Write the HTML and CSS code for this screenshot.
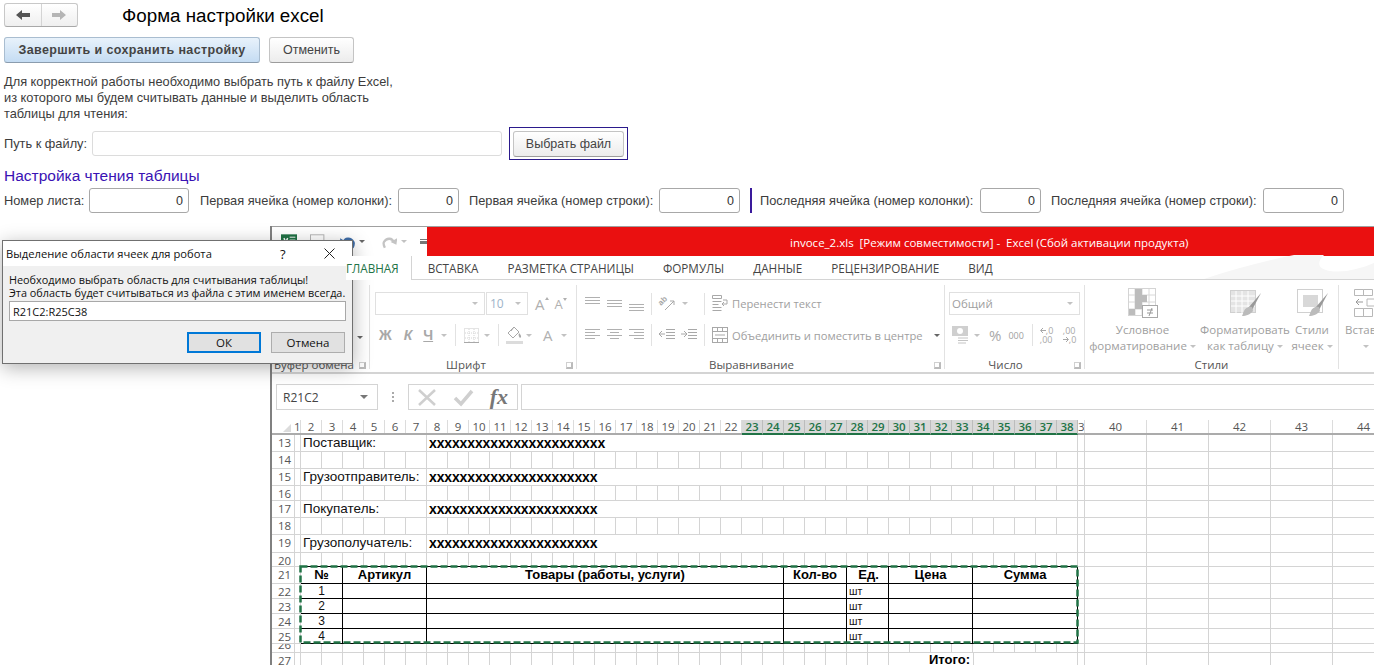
FILE: index.html
```html
<!DOCTYPE html>
<html>
<head>
  <title>Форма настройки excel</title>
  <meta charset="utf-8">
  <link rel="stylesheet" href="styles.css">
</head>
<body>

  <div class="form">
    <div class="topbar">
      <div class="nav-group">
        <div class="nav-btn">
          <svg width="16" height="12" viewBox="0 0 16 12"><path d="M1 6 7 1v3h8v4H7v3z" fill="#555"/></svg>
        </div>
        <div class="nav-btn">
          <svg width="16" height="12" viewBox="0 0 16 12"><path d="M15 6 9 1v3H1v4h8v3z" fill="#b5b5b5"/></svg>
        </div>
      </div>
      <div class="form-title">Форма настройки excel</div>
    </div>

    <div class="actions">
      <button class="btn btn-primary">Завершить и сохранить настройку</button>
      <button class="btn btn-cancel">Отменить</button>
    </div>

    <div class="intro">
      Для корректной работы необходимо выбрать путь к файлу Excel,<br>
      из которого мы будем считывать данные и выделить область<br>
      таблицы для чтения:
    </div>

    <div class="path-row">
      <label class="path-label">Путь к файлу:</label>
      <input class="path-input" type="text">
      <div class="focus-box"><button class="btn btn-file">Выбрать файл</button></div>
    </div>

    <h2 class="section-title">Настройка чтения таблицы</h2>

    <div class="params">
      <label>Номер листа:</label>
      <input class="num num-sheet" type="text" value="0">
      <label>Первая ячейка (номер колонки):</label>
      <input class="num" type="text" value="0">
      <label>Первая ячейка (номер строки):</label>
      <input class="num num-row" type="text" value="0">
      <div class="params-divider"></div>
      <label>Последняя ячейка (номер колонки):</label>
      <input class="num" type="text" value="0">
      <label>Последняя ячейка (номер строки):</label>
      <input class="num num-row" type="text" value="0">
    </div>
  </div>

  <div class="excel">
    <div class="titlebar">
      <div class="qat">
        <svg class="qat-logo" width="17" height="16" viewBox="0 0 17 16"><rect width="17" height="16" fill="#1f7244"/><path d="M9 3h6M9 6h6M9 9h6M9 12h6" stroke="#fff"/><path d="M3 4l4 8M7 4l-4 8" stroke="#fff" stroke-width="1.500"/></svg>
        <svg class="qat-save" width="15" height="15" viewBox="0 0 15 15"><rect x=".5" y=".5" width="14" height="14" fill="none" stroke="#b4b4b4"/></svg>
        <svg class="qat-undo" width="16" height="14" viewBox="0 0 16 14"><path d="M4 7C5 3 11 2 14 7c1 2 0 4-1 6" fill="none" stroke="#3f6da8" stroke-width="2.400"/><path d="M0 3l1 7 6-3z" fill="#3f6da8"/></svg>
        <span class="caret caret-dark"></span>
        <svg class="qat-redo" width="16" height="14" viewBox="0 0 16 14"><path d="M12 7C11 3 5 2 2 7c-1 2 0 4 1 6" fill="none" stroke="#c4c4c4" stroke-width="2.400"/><path d="M16 3l-1 7-6-3z" fill="#c4c4c4"/></svg>
        <span class="caret"></span>
        <span class="qat-custom"></span>
      </div>
      <div class="title-red">invoce_2.xls  [Режим совместимости] -  Excel (Сбой активации продукта)</div>
    </div>

    <div class="tabs">
      <div class="tab tab-active">ГЛАВНАЯ</div>
      <div class="tab">ВСТАВКА</div>
      <div class="tab">РАЗМЕТКА СТРАНИЦЫ</div>
      <div class="tab">ФОРМУЛЫ</div>
      <div class="tab">ДАННЫЕ</div>
      <div class="tab">РЕЦЕНЗИРОВАНИЕ</div>
      <div class="tab">ВИД</div>
      <svg class="tabs-art" width="170" height="24" viewBox="0 0 170 24"><path d="M0 24C30 14 60 6 90 0h30c-8 8-6 14 6 16 14 2 30-2 44-8v16z" fill="#f6f6f6"/></svg>
    </div>

    <div class="ribbon">
      <div class="rib-group g-clip">
        <div class="rib-caret"><span class="caret caret-dark"></span></div>
        <div class="rib-label">Буфер обмена<span class="launcher"></span></div>
      </div>

      <div class="rib-group g-font">
        <div class="rib-row row-1">
          <div class="combo combo-font"><span class="caret"></span></div>
          <div class="combo combo-size"><span class="combo-blue">10</span><span class="caret"></span></div>
          <div class="font-grow">A<i></i></div>
          <div class="font-shrink">A<i></i></div>
        </div>
        <div class="rib-row row-2">
          <b class="fmt fmt-b">Ж</b>
          <b class="fmt fmt-i">К</b>
          <b class="fmt fmt-u">Ч</b>
          <span class="caret"></span>
          <span class="rib-sep sep-a"></span>
          <svg class="ic-border" width="15" height="15" viewBox="0 0 15 15"><rect x=".5" y=".5" width="14" height="14" fill="none" stroke="#c9c9c9" stroke-dasharray="1 1"/><path d="M5 1v13M10 1v13M1 5h13M1 10h13" stroke="#d4d4d4" stroke-dasharray="1 1"/><path d="M0 14.500h15" stroke="#a8a8a8"/></svg>
          <span class="caret"></span>
          <span class="rib-sep sep-b"></span>
          <svg class="ic-fill" width="17" height="18" viewBox="0 0 17 18"><path d="M8 1 2 7l5 5 6-6z" fill="#fff" stroke="#a8a8a8"/><path d="M5 5 8 1" stroke="#a8a8a8"/><path d="M13 7c2 2 3 4 1 5-1-1-2-3-1-5z" fill="#a8a8a8"/><rect y="15" width="17" height="3" fill="#dcdcdc"/></svg>
          <span class="caret"></span>
          <span class="font-color">A</span>
          <span class="caret"></span>
        </div>
        <div class="rib-label">Шрифт<span class="launcher"></span></div>
      </div>

      <div class="rib-group g-align">
        <div class="rib-row row-1">
          <svg class="ic" width="15" height="16" viewBox="0 0 15 16"><path d="M0 1.500h15M0 4.500h15M0 7.500h15" stroke="#b0b0b0"/></svg>
          <svg class="ic" width="15" height="16" viewBox="0 0 15 16"><path d="M0 4.500h15M0 7.500h15M0 10.500h15" stroke="#b0b0b0"/></svg>
          <svg class="ic" width="15" height="16" viewBox="0 0 15 16"><path d="M0 8.500h15M0 11.500h15M0 14.500h15" stroke="#b0b0b0"/></svg>
          <span class="rib-sep sep-c"></span>
          <svg class="ic-orient" width="17" height="16" viewBox="0 0 17 16"><text class="orient-text" transform="translate(2 10) rotate(-45)">ab</text><path d="M6 14 15 5M15 5h-4M15 5v4" fill="none" stroke="#a8a8a8"/></svg>
          <span class="caret"></span>
          <span class="rib-sep sep-d"></span>
          <svg class="ic-wide" width="16" height="17" viewBox="0 0 16 17"><path d="M.5.500h9v3h-9zM.5 6.500h9M.5 9.500h6M.5 12.500h9M.5 15.500h9" fill="none" stroke="#a8a8a8"/><path d="M11 5h4v4h-5M12 7l-2 2 2 2" fill="none" stroke="#a8a8a8"/></svg>
          <span class="rib-text">Перенести текст</span>
        </div>
        <div class="rib-row row-2">
          <svg class="ic" width="15" height="14" viewBox="0 0 15 14"><path d="M0 1.500h15M0 4.500h10M0 7.500h15M0 10.500h10" stroke="#b0b0b0"/></svg>
          <svg class="ic" width="15" height="14" viewBox="0 0 15 14"><path d="M0 1.500h15M3 4.500h9M0 7.500h15M3 10.500h9" stroke="#b0b0b0"/></svg>
          <svg class="ic" width="15" height="14" viewBox="0 0 15 14"><path d="M0 1.500h15M5 4.500h10M0 7.500h15M5 10.500h10" stroke="#b0b0b0"/></svg>
          <span class="rib-sep sep-c"></span>
          <svg class="ic-indent" width="16" height="12" viewBox="0 0 16 12"><path d="M7 .500h9M7 3.500h9M7 6.500h9M7 9.500h9M0 5h6M3 2 0 5l3 3" fill="none" stroke="#a8a8a8"/></svg>
          <svg class="ic-indent" width="16" height="12" viewBox="0 0 16 12"><path d="M7 .500h9M7 3.500h9M7 6.500h9M7 9.500h9M0 5h6M3 2l3 3-3 3" fill="none" stroke="#a8a8a8"/></svg>
          <span class="rib-sep sep-e"></span>
          <svg class="ic-wide" width="16" height="16" viewBox="0 0 16 16"><rect x=".5" y=".5" width="15" height="15" fill="none" stroke="#a8a8a8"/><path d="M1 4.500h14M1 11.500h14M5.500 1v3M10.500 1v3M5.500 12v3M10.500 12v3M3 8h10" stroke="#a8a8a8"/></svg>
          <span class="rib-text">Объединить и поместить в центре</span>
          <span class="caret caret-dark caret-merge"></span>
        </div>
        <div class="rib-label">Выравнивание<span class="launcher"></span></div>
      </div>

      <div class="rib-group g-num">
        <div class="rib-row row-1">
          <div class="combo combo-num"><span class="combo-val">Общий</span><span class="caret"></span></div>
        </div>
        <div class="rib-row row-2">
          <svg class="ic-money" width="16" height="18" viewBox="0 0 16 18"><rect width="16" height="10" fill="#cfcfcf"/><circle cx="8" cy="5" r="3" fill="#fff"/><path d="M6 12h10M6 14.500h10M6 17h8" stroke="#c4c4c4"/></svg>
          <span class="caret"></span>
          <span class="pct">%</span>
          <span class="thous">000</span>
          <span class="rib-sep sep-f"></span>
          <span class="dec dec-more"><svg width="6" height="7" viewBox="0 0 6 7"><path d="M6 3.500H1M3 1 .5 3.500 3 6" fill="none" stroke="#a8a8a8"/></svg>,0<br>,00</span>
          <span class="dec">,00<br><svg width="6" height="7" viewBox="0 0 6 7"><path d="M0 3.500h5M3 1l2.500 2.500L3 6" fill="none" stroke="#a8a8a8"/></svg>,0</span>
        </div>
        <div class="rib-label">Число<span class="launcher"></span></div>
      </div>

      <div class="rib-group g-styles">
        <div class="big-btns">
          <div class="big big-cond">
            <svg width="30" height="30" viewBox="0 0 30 30"><rect x=".5" y=".5" width="27" height="27" fill="#fff" stroke="#d4d4d4"/><path d="M7 1v26M14 1v26M21 1v26M1 7h26M1 14h26M1 21h26" stroke="#d8d8d8"/><rect x="7" y="1" width="7" height="6" fill="#bcbcbc"/><rect x="7" y="7" width="12" height="7" fill="#bcbcbc"/><rect x="7" y="14" width="7" height="7" fill="#bcbcbc"/><rect x="1" y="21" width="6" height="6" fill="#bcbcbc"/><rect x="14.500" y="17.500" width="15" height="12" fill="#fff" stroke="#a8a8a8"/><path d="M19 22h6M19 25h6M24 20l-3 8" stroke="#999"/></svg>
            <div>Условное</div>
            <div>форматирование<span class="caret"></span></div>
          </div>
          <div class="big big-table">
            <svg width="31" height="30" viewBox="0 0 31 30"><rect x=".5" y="2.500" width="25" height="22" fill="#e4e4e4" stroke="#d0d0d0"/><path d="M6 3v22M12 3v22M18 3v22M1 8h24M1 13h24M1 18h24" stroke="#fff"/><path d="M31 5 19 19l3 3z" fill="#999"/><path d="M22 19c-3-1-7 1-8 4l-2 5c4 0 9-2 11-5z" fill="#bbb"/></svg>
            <div>Форматировать</div>
            <div>как таблицу<span class="caret"></span></div>
          </div>
          <div class="big big-cell">
            <svg width="31" height="30" viewBox="0 0 31 30"><rect x=".5" y="1.500" width="25" height="23" fill="#fff" stroke="#d0d0d0"/><rect x="6" y="7" width="15" height="12" fill="#d8d8d8"/><path d="M31 5 19 19l3 3z" fill="#999"/><path d="M22 19c-3-1-7 1-8 4l-2 5c4 0 9-2 11-5z" fill="#bbb"/></svg>
            <div>Стили</div>
            <div>ячеек<span class="caret"></span></div>
          </div>
        </div>
        <div class="rib-label">Стили</div>
      </div>

      <div class="rib-group g-insert">
        <div class="big big-insert">
          <svg width="30" height="30" viewBox="0 0 30 30"><path d="M.5 1.500h9v6h-9zM9.500 1.500h9v6h-9zM.5 20.500h9v8h-9zM9.500 20.500h9v8h-9zM13 11h17v7H13z" fill="none" stroke="#b8b8b8"/><path d="M9 14H2M5 11l-3 3 3 3" fill="none" stroke="#999"/></svg>
          <div>Вставить</div>
          <div><span class="caret"></span></div>
        </div>
      </div>
    </div>

    <div class="formula-bar">
      <div class="name-box">R21C2<span class="caret caret-name"></span></div>
      <div class="fx-dots"></div>
      <div class="fx-btns">
        <svg width="21" height="19" viewBox="0 0 21 19"><path d="M2 2l16 15M18 2 2 17" stroke="#cfcfcf" stroke-width="2.500"/></svg>
        <svg width="21" height="19" viewBox="0 0 21 19"><path d="M2 10l6 6L19 3" fill="none" stroke="#cfcfcf" stroke-width="3.500"/></svg>
        <span class="fx-label">fx</span>
      </div>
      <div class="formula-input"></div>
    </div>

    <div class="sheet">
      <div class="col-head">
        <div class="corner"><i></i></div>
        <span class="ch ch-first">1</span>
        <span class="ch">2</span><span class="ch">3</span><span class="ch">4</span><span class="ch">5</span><span class="ch">6</span><span class="ch">7</span>
        <span class="ch">8</span><span class="ch">9</span><span class="ch">10</span><span class="ch">11</span><span class="ch">12</span><span class="ch">13</span><span class="ch">14</span>
        <span class="ch">15</span><span class="ch">16</span><span class="ch">17</span><span class="ch">18</span><span class="ch">19</span><span class="ch">20</span><span class="ch">21</span><span class="ch">22</span>
        <span class="ch sel">23</span><span class="ch sel">24</span><span class="ch sel">25</span><span class="ch sel">26</span><span class="ch sel">27</span><span class="ch sel">28</span><span class="ch sel">29</span><span class="ch sel">30</span>
        <span class="ch sel">31</span><span class="ch sel">32</span><span class="ch sel">33</span><span class="ch sel">34</span><span class="ch sel">35</span><span class="ch sel">36</span><span class="ch sel">37</span><span class="ch sel">38</span>
        <span class="ch ch-thin">3</span>
        <span class="ch ch-wide">40</span><span class="ch ch-wide">41</span><span class="ch ch-wide">42</span><span class="ch ch-wide">43</span><span class="ch ch-wide">44</span>
      </div>

      <div class="row h17">
        <div class="rn">13</div><div class="c1"></div>
        <div class="cell-label">Поставщик:</div>
        <div class="cell-value">xxxxxxxxxxxxxxxxxxxxxxx</div>
        <div class="c39"></div><div class="wide"></div>
      </div>
      <div class="row h17">
        <div class="rn">14</div><div class="c1"></div>
        <div class="narrow"></div>
        <div class="c39"></div><div class="wide"></div>
      </div>
      <div class="row h17">
        <div class="rn">15</div><div class="c1"></div>
        <div class="cell-label">Грузоотправитель:</div>
        <div class="cell-value">xxxxxxxxxxxxxxxxxxxxxx</div>
        <div class="c39"></div><div class="wide"></div>
      </div>
      <div class="row h15">
        <div class="rn">16</div><div class="c1"></div>
        <div class="narrow"></div>
        <div class="c39"></div><div class="wide"></div>
      </div>
      <div class="row h17">
        <div class="rn">17</div><div class="c1"></div>
        <div class="cell-label">Покупатель:</div>
        <div class="cell-value">xxxxxxxxxxxxxxxxxxxxxx</div>
        <div class="c39"></div><div class="wide"></div>
      </div>
      <div class="row h17">
        <div class="rn">18</div><div class="c1"></div>
        <div class="narrow"></div>
        <div class="c39"></div><div class="wide"></div>
      </div>
      <div class="row h18">
        <div class="rn">19</div><div class="c1"></div>
        <div class="cell-label">Грузополучатель:</div>
        <div class="cell-value">xxxxxxxxxxxxxxxxxxxxxx</div>
        <div class="c39"></div><div class="wide"></div>
      </div>
      <div class="row h14">
        <div class="rn">20</div><div class="c1"></div>
        <div class="narrow"></div>
        <div class="c39"></div><div class="wide"></div>
      </div>

      <div class="row row-t h17">
        <div class="rn">21</div><div class="c1"></div>
        <div class="t t-num th">№</div><div class="t t-art th">Артикул</div><div class="t t-goods th">Товары (работы, услуги)</div>
        <div class="t t-qty th">Кол-во</div><div class="t t-unit th th-unit">Ед.</div><div class="t t-price th">Цена</div><div class="t t-sum th">Сумма</div>
        <div class="c39"></div><div class="wide"></div>
      </div>
      <div class="row row-t h15">
        <div class="rn">22</div><div class="c1"></div>
        <div class="t t-num">1</div><div class="t t-art"></div><div class="t t-goods"></div>
        <div class="t t-qty"></div><div class="t t-unit">шт</div><div class="t t-price"></div><div class="t t-sum"></div>
        <div class="c39"></div><div class="wide"></div>
      </div>
      <div class="row row-t h15">
        <div class="rn">23</div><div class="c1"></div>
        <div class="t t-num">2</div><div class="t t-art"></div><div class="t t-goods"></div>
        <div class="t t-qty"></div><div class="t t-unit">шт</div><div class="t t-price"></div><div class="t t-sum"></div>
        <div class="c39"></div><div class="wide"></div>
      </div>
      <div class="row row-t h15">
        <div class="rn">24</div><div class="c1"></div>
        <div class="t t-num">3</div><div class="t t-art"></div><div class="t t-goods"></div>
        <div class="t t-qty"></div><div class="t t-unit">шт</div><div class="t t-price"></div><div class="t t-sum"></div>
        <div class="c39"></div><div class="wide"></div>
      </div>
      <div class="row row-t h15">
        <div class="rn">25</div><div class="c1"></div>
        <div class="t t-num">4</div><div class="t t-art"></div><div class="t t-goods"></div>
        <div class="t t-qty"></div><div class="t t-unit">шт</div><div class="t t-price"></div><div class="t t-sum"></div>
        <div class="c39"></div><div class="wide"></div>
      </div>

      <div class="row h9">
        <div class="rn">26</div><div class="c1"></div>
        <div class="narrow"></div>
        <div class="c39"></div><div class="wide"></div>
      </div>
      <div class="row h17">
        <div class="rn">27</div><div class="c1"></div>
        <div class="narrow-part"></div>
        <div class="total-label">Итого:</div>
        <div class="total-value"></div>
        <div class="c39"></div><div class="wide"></div>
      </div>

      <!-- marching ants round the selected range -->
      <svg class="ants" width="781" height="80"><path d="M1.500 1.500H778" fill="none" stroke="#000"/><rect x="1.500" y="1.500" width="777" height="76" fill="none" stroke="#217346" stroke-width="2.500" stroke-dasharray="7 3"/></svg>
    </div>
  </div>

  <div class="dialog">
    <div class="dialog-head">
      <span class="dialog-title">Выделение области ячеек для робота</span>
      <span class="dialog-help">?</span>
      <svg class="dialog-close" width="11" height="11" viewBox="0 0 11 11"><path d="M.5.500l10 10M10.500.500l-10 10" stroke="#222"/></svg>
    </div>
    <div class="dialog-body">
      <div class="dialog-text">Необходимо выбрать область для считывания таблицы!<br>Эта область будет считываться из файла с этим именем всегда.</div>
      <input class="dialog-input" type="text" value="R21C2:R25C38">
      <div class="dialog-buttons">
        <button class="win-btn win-ok">ОК</button>
        <button class="win-btn">Отмена</button>
      </div>
    </div>
  </div>

</body>
</html>
```

FILE: styles.css
```css
* {
  box-sizing: border-box;
}
html, body {
  margin: 0;
  height: 665px;
  overflow: hidden;
}
body {
  position: relative;
  font-family: 'Liberation Sans', Arial, sans-serif;
  background: #fff;
  color: #3c3c3c;
}

/* 1C form */
.form {
  padding: 3px 0 0 4px;
  font-size: 12.800px;
}
.topbar {
  display: flex;
  align-items: center;
  height: 24px;
}
.nav-group {
  display: flex;
  width: 74px;
  height: 24px;
  border: 1px solid #c8c8c8;
  border-bottom-color: #a8a8a8;
  border-radius: 3px;
  background: linear-gradient(#fff, #efefef);
}
.nav-btn {
  flex: 1;
  display: flex;
  align-items: center;
  justify-content: center;
}
.nav-btn + .nav-btn {
  border-left: 1px solid #d4d4d4;
}
.form-title {
  margin: 1px 0 0 44px;
  font-size: 18.800px;
  color: #000;
}
.actions {
  display: flex;
  gap: 9px;
  margin-top: 10px;
}
.btn {
  height: 26px;
  padding: 0;
  font-family: inherit;
  font-size: 12.500px;
  color: #444;
  border: 1px solid #c4c4c4;
  border-bottom-color: #9c9c9c;
  border-radius: 3px;
  background: linear-gradient(#fff, #ececec);
}
.btn-primary {
  width: 256px;
  font-weight: bold;
  letter-spacing: .37px;
  border-color: #a9bdd0;
  border-bottom-color: #8a9cae;
  background: linear-gradient(#e8f2fb, #c4dcf3);
}
.btn-cancel {
  width: 85px;
}
.btn-file {
  width: 111px;
}
.intro {
  margin-top: 11px;
  line-height: 16px;
}
.path-row {
  display: flex;
  align-items: center;
  margin-top: 5px;
  height: 33px;
}
.path-label {
  width: 88px;
}
.path-input {
  width: 410px;
  height: 25px;
  border: 1px solid #dcdcdc;
  border-radius: 3px;
}
.focus-box {
  display: flex;
  align-items: center;
  justify-content: center;
  width: 119px;
  height: 33px;
  margin-left: 7px;
  border: 1px solid #2b1a8c;
}
.section-title {
  margin: 6px 0 0;
  font-size: 15.500px;
  line-height: 20px;
  font-weight: normal;
  color: #3a12b4;
}
.params {
  display: grid;
  grid-template-columns: 85px 111px 198px 71px 190px 91px 10px 220px 71px 212px 81px;
  align-items: center;
  height: 25px;
  margin-top: 2px;
}
.num {
  width: 61px;
  height: 25px;
  padding: 0 5px;
  font-family: inherit;
  font-size: 12.500px;
  color: #333;
  text-align: right;
  border: 1px solid #a8a8a8;
  border-radius: 3px;
}
.num-sheet {
  width: 100px;
}
.num-row {
  width: 81px;
}
.params-divider {
  width: 2px;
  height: 25px;
  background: #3a1a9c;
}

/* excel window */
.excel {
  position: relative;
  width: 1104px;
  margin: 13px 0 0 270px;
  border-left: 2px solid #808080;
  font-family: 'Open Sans', sans-serif;
}
.titlebar {
  display: flex;
  height: 30px;
  border-top: 1px solid #a0a0a0;
}
.qat {
  display: flex;
  align-items: center;
  width: 155px;
}
.qat-logo {
  margin-left: 9px;
}
.qat-save {
  margin-left: 13px;
}
.qat-undo {
  margin-left: 15px;
}
.qat-redo {
  margin-left: 17px;
}
.qat .caret {
  margin-left: 4px;
}
.qat-custom {
  width: 7px;
  height: 5px;
  margin-left: 13px;
  border-top: 1px solid #777;
  border-bottom: 3px solid #777;
}
.caret {
  display: inline-block;
  width: 0;
  height: 0;
  margin-left: 6px;
  border: 3px solid transparent;
  border-top: 3px solid #c2c2c2;
  border-bottom: 0;
  vertical-align: middle;
}
.caret-dark {
  border-top-color: #666;
}
.title-red {
  flex: 1;
  padding-left: 363px;
  line-height: 31px;
  font-size: 11.500px;
  color: #fff;
  white-space: pre;
  background: #ea1010;
}
.tabs {
  position: relative;
  display: flex;
  height: 24px;
  padding-left: 74px;
  border-bottom: 1px solid #d4d4d4;
  font-size: 11.700px;
  line-height: 25px;
  color: #444;
  white-space: nowrap;
}
.tab {
  position: relative;
  z-index: 1;
  margin-left: 29px;
}
.tab-active {
  height: 24px;
  margin-left: 0;
  padding-right: 12px;
  color: #217346;
  background: #fff;
  border-right: 1px solid #d4d4d4;
}
.tab-active + .tab {
  margin-left: 16px;
}
.tabs-art {
  position: absolute;
  right: 0;
  bottom: 0;
}

/* ribbon */
.ribbon {
  display: flex;
  height: 94px;
  padding: 5px 0 3px;
  border-bottom: 2px solid #d4d4d4;
  font-size: 11.500px;
  color: #a0a0a0;
  white-space: nowrap;
  overflow: hidden;
}
.rib-group {
  position: relative;
  display: flex;
  flex-direction: column;
  flex: none;
  height: 84px;
  border-right: 1px solid #e2e2e2;
}
.g-clip {
  width: 98px;
}
.g-font {
  width: 207px;
  padding-left: 5px;
}
.g-align {
  width: 368px;
  padding-left: 8px;
}
.g-num {
  width: 140px;
  padding-left: 4px;
}
.g-styles {
  width: 254px;
}
.g-insert {
  width: 40px;
  border-right: 0;
}
.rib-row {
  display: flex;
  align-items: center;
}
.row-1 {
  height: 23px;
  margin-top: 7px;
}
.row-2 {
  height: 22px;
  margin-top: 9px;
}
.rib-caret {
  position: absolute;
  right: 6px;
  top: 44px;
}
.rib-label {
  position: relative;
  height: 16px;
  margin: auto 0 -4px -5px;
  padding-right: 14px;
  text-align: center;
  line-height: 16px;
  color: #555;
}
.g-align .rib-label {
  margin-left: -8px;
  padding-right: 18px;
}
.g-num .rib-label {
  margin-left: -4px;
  padding-right: 18px;
}
.g-styles .rib-label {
  margin-left: 0;
  padding-right: 0;
}
.g-clip .rib-label {
  margin-left: 0;
  padding: 0 0 0 2px;
  text-align: left;
}
.launcher {
  position: absolute;
  right: 3px;
  top: 5px;
  width: 7px;
  height: 7px;
  border-left: 1px solid #d0d0d0;
  border-top: 1px solid #d0d0d0;
  border-right: 2px solid #bbb;
  border-bottom: 2px solid #bbb;
}
.combo {
  display: flex;
  align-items: center;
  justify-content: flex-end;
  height: 23px;
  padding-right: 6px;
  border: 1px solid #e0e0e0;
  font-size: 12px;
}
.combo-font {
  width: 110px;
}
.combo-size {
  width: 42px;
  margin-left: 1px;
  justify-content: space-between;
  padding-left: 3px;
}
.combo-blue {
  color: #9db3c9;
}
.combo-num {
  width: 131px;
  justify-content: space-between;
  padding-left: 2px;
}
.font-grow, .font-shrink {
  position: relative;
  font-size: 15px;
  color: #b0b0b0;
}
.font-grow {
  margin-left: 7px;
}
.font-shrink {
  margin-left: 10px;
  font-size: 13px;
}
.font-grow i, .font-shrink i {
  position: absolute;
  top: 3px;
  right: -4px;
  border: 2.500px solid transparent;
  border-bottom: 3px solid #b0b0b0;
  border-top: 0;
}
.font-shrink i {
  border-bottom: 0;
  border-top: 3px solid #b0b0b0;
}
.fmt {
  font-family: 'Liberation Sans', sans-serif;
  font-size: 14px;
  color: #a8a8a8;
}
.fmt-b {
  margin-left: 4px;
}
.fmt-i {
  margin-left: 12px;
  font-style: italic;
}
.fmt-u {
  margin-left: 11px;
  text-decoration: underline;
}
.fmt-u + .caret {
  margin-left: 8px;
}
.ic-border + .caret {
  margin-left: 5px;
}
.ic-fill + .caret {
  margin-left: 3px;
}
.rib-sep {
  width: 1px;
  height: 22px;
  background: #e2e2e2;
}
.sep-a {
  margin: 0 8px;
}
.sep-b {
  margin: 0 7px 0 8px;
}
.sep-c {
  margin: 0 7px;
}
.sep-d {
  margin: 0 7px 0 16px;
}
.sep-e {
  margin: 0 7px;
}
.sep-f {
  margin: 0 7px 0 8px;
}
.ic + .ic {
  margin-left: 7px;
}
.ic-indent + .ic-indent {
  margin-left: 6px;
}
.ic-orient {
  overflow: visible;
}
.orient-text {
  font-family: 'Liberation Sans', sans-serif;
  font-size: 8px;
  font-weight: bold;
  fill: #a8a8a8;
}
.rib-text {
  margin-left: 4px;
  font-size: 11.200px;
}
.caret-merge {
  margin-left: 11px;
}
.font-color {
  margin-left: 11px;
  font-size: 15px;
  color: #b0b0b0;
}
.font-color + .caret {
  margin-left: 8px;
}
.combo-val {
  font-size: 11.500px;
}
.ic-money {
  margin-left: 3px;
}
.pct {
  margin-left: 9px;
  font-size: 15px;
  color: #a8a8a8;
}
.thous {
  margin-left: 7px;
  font-size: 9px;
}
.dec {
  font-size: 9px;
  line-height: 9px;
  width: 14px;
  color: #a8a8a8;
}
.dec-more {
  margin-right: 9px;
}
.big-btns {
  display: flex;
  height: 80px;
}
.big {
  text-align: center;
  line-height: 16px;
  font-size: 11.500px;
  white-space: nowrap;
}
.big svg {
  display: block;
  margin: 3px auto 4px;
}
.big-cond {
  width: 115px;
}
.big-table {
  width: 90px;
}
.big-cell {
  width: 44px;
}
.big .caret {
  margin-left: 3px;
}
.big-insert {
  width: 50px;
  text-align: left;
  padding-left: 6px;
}
.big-insert svg {
  margin-left: 9px;
}
.big-insert .caret {
  margin-left: 18px;
}

/* formula bar */
.formula-bar {
  display: flex;
  align-items: center;
  height: 26px;
  margin-top: 10px;
}
.name-box {
  display: flex;
  align-items: center;
  justify-content: space-between;
  width: 102px;
  height: 26px;
  margin-left: 4px;
  padding: 0 9px 0 6px;
  border: 1px solid #d4d4d4;
  font-size: 12px;
  color: #444;
}
.caret-name {
  border-width: 4px;
  border-bottom: 0;
  border-top-color: #777;
}
.fx-dots {
  width: 2px;
  height: 10px;
  margin: 0 14px;
  background: repeating-linear-gradient(#aaa 0 2px, transparent 2px 4px);
}
.fx-btns {
  display: flex;
  align-items: center;
  justify-content: space-between;
  width: 110px;
  height: 26px;
  padding: 0 9px 0 8px;
  border: 1px solid #d4d4d4;
}
.fx-label {
  font-family: 'Liberation Serif', serif;
  font-size: 22px;
  font-style: italic;
  font-weight: bold;
  line-height: 24px;
  color: #777;
}
.formula-input {
  flex: 1;
  height: 26px;
  margin-left: 3px;
  border: 1px solid #d4d4d4;
  border-right: 0;
}

/* sheet */
.sheet {
  position: relative;
  margin-top: 10px;
}
.col-head {
  display: flex;
  height: 15px;
  border-bottom: 2px solid #ababab;
  font-size: 11.500px;
  line-height: 14px;
  color: #555;
  white-space: nowrap;
}
.corner {
  position: relative;
  flex: none;
  width: 22px;
}
.corner i {
  position: absolute;
  right: 3px;
  bottom: 1px;
  border-left: 8px solid transparent;
  border-bottom: 8px solid #dcdcdc;
}
.ch {
  flex: none;
  width: 21px;
  text-align: center;
  border-right: 1px solid #dcdcdc;
  overflow: hidden;
}
.ch-first {
  width: 7px;
}
.ch-thin {
  width: 7px;
}
.ch-wide {
  width: 62px;
}
.sel {
  height: 15px;
  font-weight: 600;
  color: #217346;
  background: #d9d9d9;
  border-right-color: #bcbcbc;
  border-bottom: 2px solid #217346;
}
.row {
  display: flex;
  border-bottom: 1px solid #d4d4d4;
  white-space: nowrap;
  overflow: hidden;
}
.row-t {
  border-bottom: 0;
}
.row-t > * {
  border-bottom: 1px solid #d4d4d4;
}
.h9 { height: 9px; }
.h14 { height: 14px; }
.h15 { height: 15px; }
.h17 { height: 17px; }
.h18 { height: 18px; }
.rn {
  flex: none;
  width: 22px;
  padding-left: 3px;
  font-size: 11.500px;
  line-height: 16px;
  text-align: center;
  color: #555;
}
.h9 .rn {
  margin-top: -7px;
}
.c1 {
  flex: none;
  width: 7px;
  border-left: 1px solid #d4d4d4;
  border-right: 1px solid #d4d4d4;
}
.cell-label {
  flex: none;
  width: 126px;
  padding-left: 2px;
  border-right: 1px solid #d4d4d4;
  font-family: 'Liberation Sans', sans-serif;
  font-size: 13.500px;
  line-height: 15px;
  color: #111;
}
.cell-value {
  flex: none;
  width: 651px;
  padding-left: 2px;
  border-right: 1px solid #d4d4d4;
  font-family: 'Liberation Sans', sans-serif;
  font-size: 14px;
  font-weight: bold;
  letter-spacing: -.13px;
  line-height: 17px;
  color: #000;
}
.narrow {
  flex: none;
  width: 777px;
  background: repeating-linear-gradient(90deg, transparent 0 20px, #d4d4d4 20px 21px);
}
.narrow-part {
  flex: none;
  width: 588px;
  background: repeating-linear-gradient(90deg, transparent 0 20px, #d4d4d4 20px 21px);
}
.total-label {
  flex: none;
  width: 84px;
  padding-right: 3px;
  font-family: 'Liberation Sans', sans-serif;
  font-size: 13px;
  font-weight: bold;
  text-align: right;
  line-height: 13px;
  color: #000;
}
.total-value {
  flex: none;
  width: 105px;
  border-left: 1px solid #d4d4d4;
  border-right: 1px solid #d4d4d4;
}
.c39 {
  flex: none;
  width: 7px;
  border-right: 1px solid #d4d4d4;
}
.wide {
  flex: 1;
  background: repeating-linear-gradient(90deg, transparent 0 61px, #d4d4d4 61px 62px);
}
.row-t > .t {
  flex: none;
  border-right: 1px solid #000;
  border-bottom-color: #000;
  font-family: 'Liberation Sans', sans-serif;
  font-size: 12px;
  line-height: 14px;
  text-align: center;
  color: #111;
}
.row-t > .th {
  font-size: 13px;
  font-weight: bold;
  line-height: 16px;
  color: #000;
}
.t-num { width: 42px; }
.t-art { width: 84px; }
.t-goods { width: 357px; }
.t-qty { width: 63px; }
.row-t > .t-unit {
  width: 42px;
  padding-left: 2px;
  font-size: 10.500px;
  line-height: 15px;
  text-align: left;
}
.row-t > .th-unit {
  font-size: 13px;
  line-height: 16px;
  text-align: center;
}
.t-price { width: 84px; }
.t-sum { width: 105px; }
.ants {
  position: absolute;
  left: 27px;
  top: 145px;
}

/* windows dialog */
.dialog {
  position: absolute;
  left: 2px;
  top: 240px;
  width: 351px;
  height: 124px;
  border: 1px solid #707070;
  background: #f0f0f0;
  box-shadow: 0 4px 18px rgba(0, 0, 0, .3);
  font-family: 'Open Sans', sans-serif;
  font-size: 11.500px;
  color: #111;
}
.dialog-head {
  position: relative;
  display: flex;
  align-items: center;
  height: 25px;
  padding-left: 3px;
  background: #fff;
}
.dialog-title {
  font-size: 11.200px;
}
.dialog-help {
  position: absolute;
  left: 277px;
  font-size: 13px;
}
.dialog-close {
  position: absolute;
  left: 321px;
}
.dialog-body {
  padding: 7px 6px 0;
}
.dialog-text {
  line-height: 13px;
  font-size: 10.850px;
  white-space: nowrap;
}
.dialog-input {
  display: block;
  width: 337px;
  height: 20px;
  margin-top: 2px;
  padding: 0 3px;
  border: 1px solid #a8a8a8;
  font-family: inherit;
  font-size: 11px;
  color: #111;
}
.dialog-buttons {
  display: flex;
  justify-content: flex-end;
  gap: 10px;
  margin-top: 11px;
  padding-right: 1px;
}
.win-btn {
  width: 74px;
  height: 21px;
  padding: 0;
  border: 1px solid #adadad;
  background: #e1e1e1;
  font-family: inherit;
  font-size: 11.500px;
  color: #111;
}
.win-ok {
  border: 2px solid #0078d7;
}
```
